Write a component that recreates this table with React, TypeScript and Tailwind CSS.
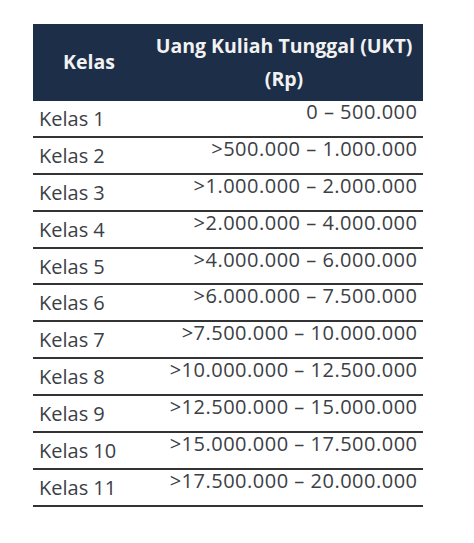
const rows: [string, string][] = [
  ["Kelas 1", "0 – 500.000"],
  ["Kelas 2", ">500.000 – 1.000.000"],
  ["Kelas 3", ">1.000.000 – 2.000.000"],
  ["Kelas 4", ">2.000.000 – 4.000.000"],
  ["Kelas 5", ">4.000.000 – 6.000.000"],
  ["Kelas 6", ">6.000.000 – 7.500.000"],
  ["Kelas 7", ">7.500.000 – 10.000.000"],
  ["Kelas 8", ">10.000.000 – 12.500.000"],
  ["Kelas 9", ">12.500.000 – 15.000.000"],
  ["Kelas 10", ">15.000.000 – 17.500.000"],
  ["Kelas 11", ">17.500.000 – 20.000.000"],
];

export default function App() {
  return (
    <div
      className="w-full h-[543px] bg-white pt-[24px] pl-[33px]"
      style={{ fontFamily: '"Open Sans", "Liberation Sans", Arial, sans-serif' }}
    >
      <div className="w-[390px]">
        {/* header */}
        <div className="flex bg-[#1c2e48] text-[#f2f2f2] font-bold text-[19.5px] h-[77px]">
          <div className="w-[112px] flex items-center justify-center pb-[2px]">Kelas</div>
          <div className="flex-1 flex flex-col items-center pt-[5px] leading-[33px]">
            <span>Uang Kuliah Tunggal (UKT)</span>
            <span>(Rp)</span>
          </div>
        </div>

        {/* body */}
        {rows.map(([kelas, range]) => (
          <div
            key={kelas}
            className="flex justify-between h-[36.9px] border-b-2 border-[#333333] text-[20px] leading-[21px] text-[#3b4046] px-[6px]"
          >
            <span className="pt-[7px]">{kelas}</span>
            <span className="tracking-[0.5px] -mr-[0.5px]">{range}</span>
          </div>
        ))}
      </div>
    </div>
  );
}
